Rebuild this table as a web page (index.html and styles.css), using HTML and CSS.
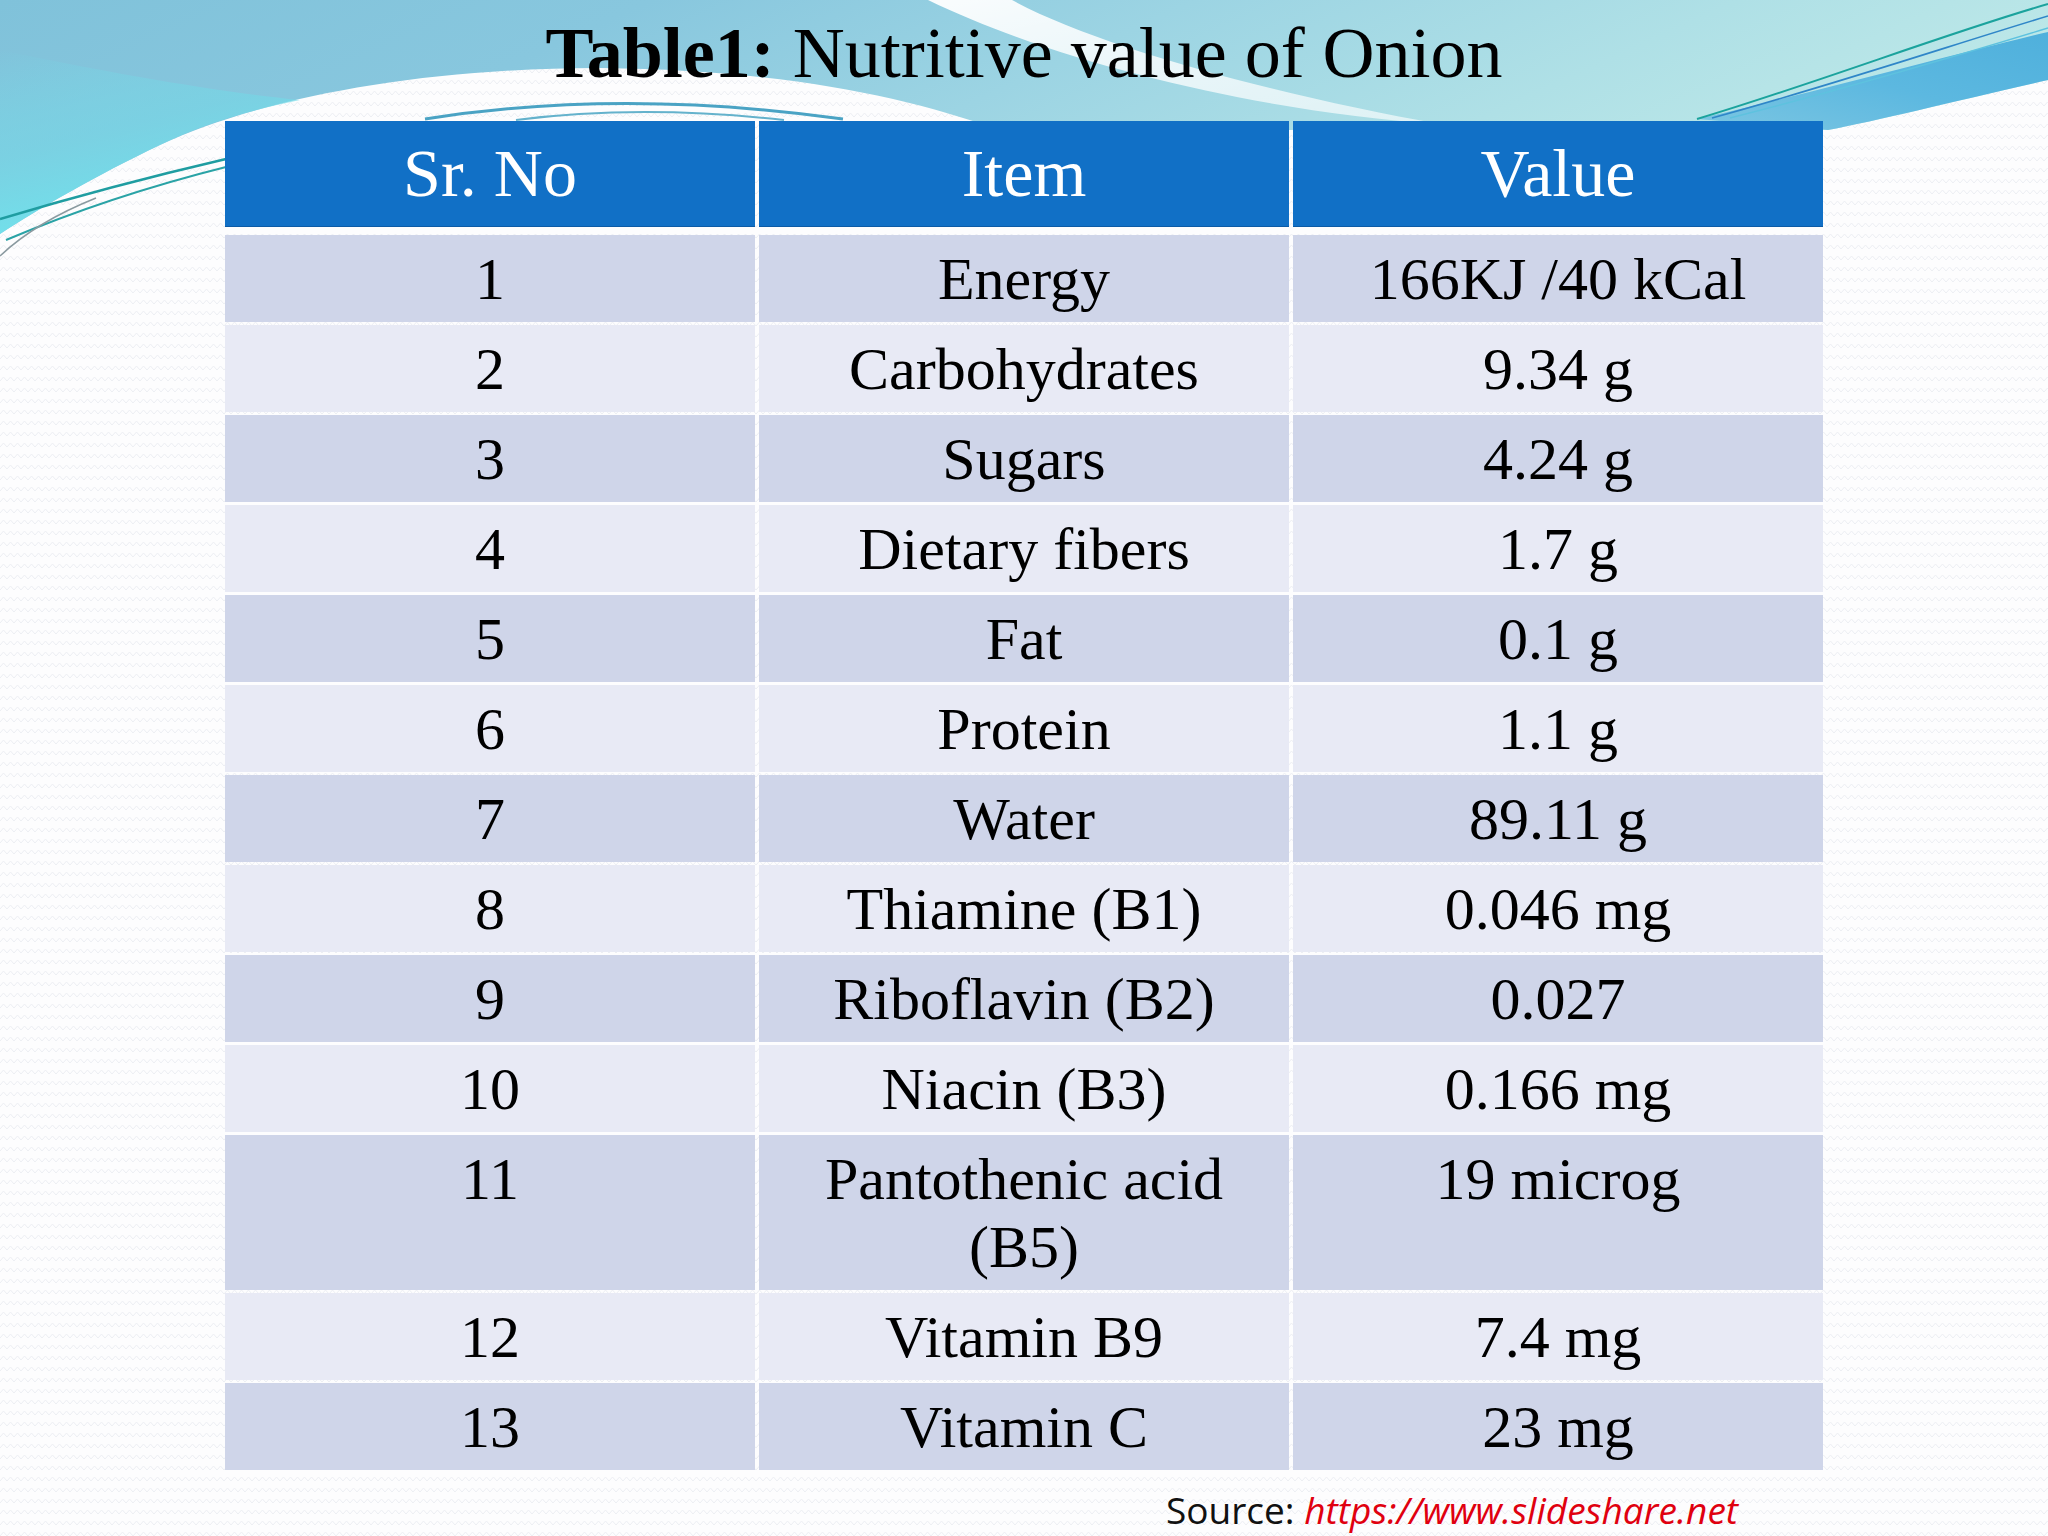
FILE: index.html
```html
<!DOCTYPE html>
<html lang="en">
<head>
<meta charset="utf-8">
<title>Table1: Nutritive value of Onion</title>
<link rel="stylesheet" href="styles.css">
</head>
<body>
<div class="slide">
  <svg class="bg" width="2048" height="1536" viewBox="0 0 2048 1536" aria-hidden="true">
    <defs>
      <pattern id="zz" width="14" height="11" patternUnits="userSpaceOnUse">
        <path d="M0,7 L3.5,3 L7,7 L10.5,3 L14,7" stroke="#eceef3" stroke-width="1" fill="none"/>
      </pattern>
      <linearGradient id="sky" x1="0" y1="0" x2="1" y2="0.25">
        <stop offset="0" stop-color="#80c2da"/>
        <stop offset="0.3" stop-color="#88c7de"/>
        <stop offset="0.55" stop-color="#9cd4e3"/>
        <stop offset="0.8" stop-color="#afe0e6"/>
        <stop offset="1" stop-color="#bde8e8"/>
      </linearGradient>
      <linearGradient id="cyan" x1="0" y1="0" x2="0.4" y2="1">
        <stop offset="0" stop-color="#6fe4ec" stop-opacity="0"/>
        <stop offset="0.5" stop-color="#74d8e6" stop-opacity="0.6"/>
        <stop offset="1" stop-color="#6ee6ee" stop-opacity="1"/>
      </linearGradient>
      <linearGradient id="band" x1="0" y1="1" x2="1" y2="0">
        <stop offset="0" stop-color="#7cc6e2"/>
        <stop offset="0.5" stop-color="#5cb8e0"/>
        <stop offset="1" stop-color="#4fb0dc"/>
      </linearGradient>
      <linearGradient id="streak" x1="0" y1="0" x2="1" y2="1">
        <stop offset="0" stop-color="#ffffff" stop-opacity="0.95"/>
        <stop offset="1" stop-color="#ffffff" stop-opacity="0.6"/>
      </linearGradient>
    </defs>
    <rect width="2048" height="1536" fill="#fdfdfe"/>
    <rect width="2048" height="1536" fill="url(#zz)"/>
    <path d="M0,0 L2048,0 L2048,80 C1960,100 1880,120 1828,130 L1000,130 C900,95 780,70 600,68 C420,68 260,98 160,145 C95,176 40,208 0,234 Z" fill="url(#sky)"/>
    <path d="M0,50 C120,75 220,92 300,100 C250,110 200,125 160,145 C95,176 40,208 0,234 Z" fill="url(#cyan)"/>
    <path d="M1697,119 C1800,96 1950,55 2048,32 L2048,80 C1960,100 1880,120 1828,130 Z" fill="url(#band)"/>
    <path d="M928,0 L1012,0 C1100,48 1290,98 1440,124 C1260,112 1060,64 928,0 Z" fill="url(#streak)"/>
    <path d="M1697,119 C1820,82 1950,32 2048,4" stroke="#1ba39d" stroke-width="2" fill="none"/>
    <path d="M1712,118 C1830,86 1955,44 2048,16" stroke="#2f86c8" stroke-width="1.6" fill="none"/>
    <path d="M1730,118 C1840,90 1960,55 2048,28" stroke="#5ec2df" stroke-width="1.4" fill="none"/>
    <path d="M0,219 Q110,186 226,159" stroke="#1f9da1" stroke-width="2.5" fill="none"/>
    <path d="M6,240 Q110,196 226,167" stroke="#2aa3a6" stroke-width="2" fill="none"/>
    <path d="M0,256 Q36,222 96,198" stroke="#8a9aa0" stroke-width="1.6" fill="none"/>
    <path d="M425,119 Q620,88 843,119" stroke="#4aa3c4" stroke-width="3" fill="none"/>
    <path d="M516,120 Q640,104 784,120" stroke="#64b2cc" stroke-width="2" fill="none"/>
  </svg>

  <h1 class="title"><b>Table1:</b> Nutritive value of Onion</h1>

  <div class="table">
    <div class="row head">
      <div class="cell">Sr. No</div>
      <div class="cell">Item</div>
      <div class="cell">Value</div>
    </div>
    <div class="rows">
      <div class="row odd"><div class="cell">1</div><div class="cell">Energy</div><div class="cell">166KJ /40 kCal</div></div>
      <div class="row even"><div class="cell">2</div><div class="cell">Carbohydrates</div><div class="cell">9.34 g</div></div>
      <div class="row odd"><div class="cell">3</div><div class="cell">Sugars</div><div class="cell">4.24 g</div></div>
      <div class="row even"><div class="cell">4</div><div class="cell">Dietary fibers</div><div class="cell">1.7 g</div></div>
      <div class="row odd"><div class="cell">5</div><div class="cell">Fat</div><div class="cell">0.1 g</div></div>
      <div class="row even"><div class="cell">6</div><div class="cell">Protein</div><div class="cell">1.1 g</div></div>
      <div class="row odd"><div class="cell">7</div><div class="cell">Water</div><div class="cell">89.11 g</div></div>
      <div class="row even"><div class="cell">8</div><div class="cell">Thiamine (B1)</div><div class="cell">0.046 mg</div></div>
      <div class="row odd"><div class="cell">9</div><div class="cell">Riboflavin (B2)</div><div class="cell">0.027</div></div>
      <div class="row even"><div class="cell">10</div><div class="cell">Niacin (B3)</div><div class="cell">0.166 mg</div></div>
      <div class="row odd"><div class="cell">11</div><div class="cell">Pantothenic acid<br>(B5)</div><div class="cell">19 microg</div></div>
      <div class="row even"><div class="cell">12</div><div class="cell">Vitamin B9</div><div class="cell">7.4 mg</div></div>
      <div class="row odd"><div class="cell">13</div><div class="cell">Vitamin C</div><div class="cell">23 mg</div></div>
    </div>
  </div>

  <p class="source">Source: <span class="link">https://www.slideshare.net</span></p>
</div>
</body>
</html>
```

FILE: styles.css
```css
html, body {
  margin: 0;
  padding: 0;
  background: #fdfdfe;
}

.slide {
  position: relative;
  width: 2048px;
  height: 1536px;
  overflow: hidden;
  font-family: "Liberation Serif", "Times New Roman", serif;
  color: #000;
}

.bg {
  position: absolute;
  top: 0;
  left: 0;
  z-index: 0;
}

.title,
.table,
.source {
  position: relative;
  z-index: 1;
}

.title {
  margin: 0;
  padding-top: 12px;
  font-size: 72px;
  line-height: 83px;
  font-weight: normal;
  text-align: center;
}

.title b {
  font-weight: bold;
}

.table {
  margin: 26px 0 0 225px;
  width: 1598px;
}

.row {
  display: grid;
  grid-template-columns: repeat(3, 1fr);
  column-gap: 4px;
}

.head {
  margin-bottom: 8px;
}

.head .cell {
  box-sizing: border-box;
  height: 106px;
  background: #1170c6;
  border-bottom: 1px solid #0c5ba6;
  color: #ffffff;
  font-size: 68px;
  line-height: 104px;
  text-align: center;
}

.rows {
  display: flex;
  flex-direction: column;
  gap: 3px;
}

.rows .cell {
  padding: 10px 8px 9px;
  font-size: 60px;
  line-height: 68px;
  text-align: center;
}

.odd .cell {
  background: #cfd5e9;
}

.even .cell {
  background: #e8eaf5;
}

.source {
  margin: 18px 0 0 1166px;
  font-family: "Open Sans", Lato, sans-serif;
  font-size: 37px;
  line-height: 44px;
  color: #111;
  white-space: nowrap;
}

.link {
  color: #e0000f;
  font-style: italic;
}
```
